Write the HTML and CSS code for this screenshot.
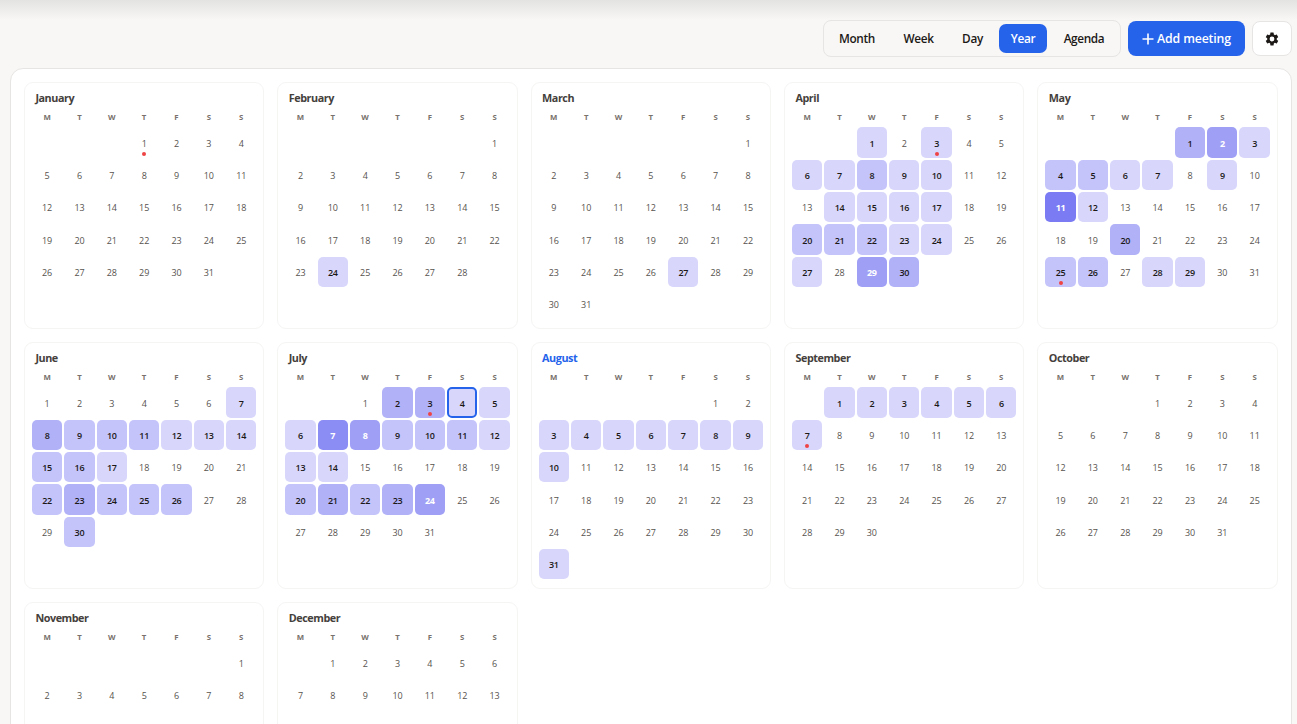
FILE: index.html
```
<!DOCTYPE html>
<html lang="en">
<head>
    <meta charset="UTF-8">
    <title>Calendar - Year</title>
    <link rel="stylesheet" href="styles.css">
</head>
<body>
    <header class="toolbar">
        <nav class="views">
            <button class="view view-month">Month</button>
            <button class="view view-week">Week</button>
            <button class="view view-day">Day</button>
            <button class="view view-year active">Year</button>
            <button class="view view-agenda">Agenda</button>
        </nav>
        <button class="add-btn">
            <svg width="12" height="12" viewBox="0 0 12 12"><path d="M6 .5v11M.5 6h11" stroke="currentColor" stroke-width="1.6" fill="none"/></svg>
            <span>Add meeting</span>
        </button>
        <button class="settings-btn" aria-label="Settings">
            <svg width="16" height="16" viewBox="0 0 24 24"><path fill="currentColor" d="M19.14 12.94c.04-.3.06-.61.06-.94 0-.32-.02-.64-.07-.94l2.03-1.58a.49.49 0 0 0 .12-.61l-1.92-3.32a.49.49 0 0 0-.59-.22l-2.39.96c-.5-.38-1.03-.7-1.62-.94l-.36-2.54a.48.48 0 0 0-.48-.41h-3.84c-.24 0-.43.17-.47.41l-.36 2.54c-.59.24-1.13.57-1.62.94l-2.39-.96a.48.48 0 0 0-.59.22L2.74 8.87c-.12.21-.08.47.12.61l2.03 1.58c-.05.3-.09.63-.09.94s.02.64.07.94l-2.03 1.58a.49.49 0 0 0-.12.61l1.92 3.32c.12.22.37.29.59.22l2.39-.96c.5.38 1.03.7 1.62.94l.36 2.54c.05.24.24.41.48.41h3.84c.24 0 .44-.17.47-.41l.36-2.54c.59-.24 1.13-.56 1.62-.94l2.39.96c.22.08.47 0 .59-.22l1.92-3.32a.48.48 0 0 0-.12-.61zM12 15.6A3.6 3.6 0 1 1 12 8.4a3.6 3.6 0 0 1 0 7.2z"/></svg>
        </button>
    </header>

    <main class="calendar" id="calendar"></main>

    <script src="script.js"></script>
</body>
</html>
```
FILE: styles.css
```
/* General styling */
* {
    box-sizing: border-box;
}

body {
    margin: 0;
    height: 724px;
    overflow: hidden;
    font-family: "Open Sans", "Noto Sans", sans-serif;
    color: #1c1917;
    background: linear-gradient(#e3e3e1, #f8f7f5 20px);
}

button {
    margin: 0;
    padding: 0;
    border: none;
    background: none;
    font-family: inherit;
    color: inherit;
    cursor: pointer;
}

/* Toolbar */
.toolbar {
    display: flex;
    justify-content: flex-end;
    align-items: center;
    gap: 7px;
    height: 68px;
    padding: 9px 5px 0 0;
}

.views {
    display: flex;
    gap: 4px;
    height: 37px;
    padding: 3px;
    border: 1px solid #e7e5e4;
    border-radius: 8px;
}

.view {
    height: 29px;
    padding-bottom: 1px;
    border-radius: 7px;
    font-size: 11.8px;
    font-weight: 600;
    letter-spacing: -0.35px;
}

.view-month { width: 60px; }
.view-week { width: 55px; }
.view-day { width: 45px; }
.view-year { width: 48px; }
.view-agenda { width: 66px; }

.view.active {
    background-color: #2563eb;
    color: white;
}

.add-btn {
    display: flex;
    align-items: center;
    justify-content: center;
    gap: 3px;
    width: 117px;
    height: 35px;
    border-radius: 8px;
    background-color: #2563eb;
    color: white;
    font-size: 12.3px;
    font-weight: 600;
    letter-spacing: -0.15px;
}

.settings-btn {
    display: flex;
    align-items: center;
    justify-content: center;
    width: 40px;
    height: 35px;
    border: 1px solid #e7e5e4;
    border-radius: 8px;
    background-color: white;
}

/* Year grid */
.calendar {
    display: grid;
    grid-template-columns: repeat(5, 1fr);
    grid-auto-rows: 247px;
    gap: 13.1px 12.9px;
    margin: 0 5px 0 10px;
    padding: 13px 13.2px 40px 12.9px;
    border: 1px solid #e7e5e4;
    border-radius: 13px;
    background-color: white;
}

.month {
    padding: 7px 7px 8px;
    border: 1px solid #f5f5f4;
    border-radius: 9px;
}

.month-name {
    height: 16px;
    margin: 0 0 4px;
    padding-left: 3.5px;
    line-height: 15px;
    font-size: 10.8px;
    font-weight: 700;
    letter-spacing: -0.45px;
    color: #44403c;
}

.month-name.current {
    color: #2563eb;
}

.weekdays,
.days {
    display: grid;
    grid-template-columns: repeat(7, 1fr);
    gap: 2px;
}

.weekdays {
    height: 17.2px;
    line-height: 15px;
    font-size: 7.8px;
    font-weight: 700;
    text-align: center;
    color: #78716c;
}

.day {
    position: relative;
    display: flex;
    align-items: center;
    justify-content: center;
    aspect-ratio: 1;
    padding-top: 1.4px;
    border-radius: 5px;
    font-size: 9px;
    font-weight: 500;
    letter-spacing: -0.1px;
    color: #57534e;
}

.busy {
    font-weight: 600;
    letter-spacing: -0.3px;
    color: #1c1917;
}

.level-1 { background-color: #d8d7fb; }
.level-2 { background-color: #c4c4fb; }
.level-3 { background-color: #b1b1f8; }
.level-4 { background-color: #9f9ff5; }
.level-5 { background-color: #8c8df4; }
.level-6 { background-color: #7b7cf3; }

.level-4,
.level-5,
.level-6 {
    font-weight: 700;
    color: white;
}

.today {
    border: 2px solid #2563eb;
}

/* Holiday dot */
.holiday::after {
    content: "";
    position: absolute;
    bottom: 2px;
    left: 50%;
    width: 4px;
    height: 4px;
    margin-left: -2px;
    border-radius: 50%;
    background-color: #ef4444;
}
```
FILE: script.js
```
// start: empty cells before the 1st, busy: meeting level for each day
const months = [
    { name: 'January', start: 3, days: 31, busy: {}, holidays: [1] },
    { name: 'February', start: 6, days: 28, busy: { 24: 1 } },
    { name: 'March', start: 6, days: 31, busy: { 27: 1 } },
    { name: 'April', start: 2, days: 30, holidays: [3],
      busy: { 1: 1, 3: 1, 6: 1, 7: 1, 8: 2, 9: 1, 10: 1, 14: 1, 15: 1, 16: 1, 17: 1, 20: 2, 21: 2, 22: 2, 23: 1, 24: 1, 27: 1, 29: 4, 30: 3 } },
    { name: 'May', start: 4, days: 31, holidays: [25],
      busy: { 1: 3, 2: 4, 3: 1, 4: 2, 5: 2, 6: 1, 7: 1, 9: 1, 11: 6, 12: 1, 20: 3, 25: 2, 26: 2, 28: 1, 29: 1 } },
    { name: 'June', start: 0, days: 30,
      busy: { 7: 1, 8: 3, 9: 2, 10: 2, 11: 2, 12: 1, 13: 1, 14: 1, 15: 2, 16: 2, 17: 1, 22: 2, 23: 3, 24: 2, 25: 2, 26: 2, 30: 2 } },
    { name: 'July', start: 2, days: 31, holidays: [3], today: 4,
      busy: { 2: 3, 3: 3, 4: 1, 5: 1, 6: 1, 7: 5, 8: 4, 9: 2, 10: 2, 11: 2, 12: 1, 13: 1, 14: 1, 20: 2, 21: 3, 22: 2, 23: 3, 24: 4 } },
    { name: 'August', start: 5, days: 31, current: true,
      busy: { 3: 1, 4: 1, 5: 1, 6: 1, 7: 1, 8: 1, 9: 1, 10: 1, 31: 1 } },
    { name: 'September', start: 1, days: 30, holidays: [7],
      busy: { 1: 1, 2: 1, 3: 1, 4: 1, 5: 1, 6: 1, 7: 1 } },
    { name: 'October', start: 3, days: 31, busy: {} },
    { name: 'November', start: 6, days: 30, busy: {} },
    { name: 'December', start: 1, days: 31, busy: {} }
];

function dayCell(month, day) {
    let cls = 'day';
    if (month.busy[day]) cls += ' busy level-' + month.busy[day];
    if (month.holidays && month.holidays.includes(day)) cls += ' holiday';
    if (month.today === day) cls += ' today';
    return `<div class="${cls}">${day}</div>`;
}

let html = '';
months.forEach((month) => {
    let cells = '<div class="day"></div>'.repeat(month.start);
    for (let day = 1; day <= month.days; day++) {
        cells += dayCell(month, day);
    }

    html += `
        <section class="month">
            <h3 class="month-name${month.current ? ' current' : ''}">${month.name}</h3>
            <div class="weekdays">${['M', 'T', 'W', 'T', 'F', 'S', 'S'].map((d) => `<span>${d}</span>`).join('')}</div>
            <div class="days">${cells}</div>
        </section>`;
});
document.getElementById('calendar').innerHTML = html;
```
